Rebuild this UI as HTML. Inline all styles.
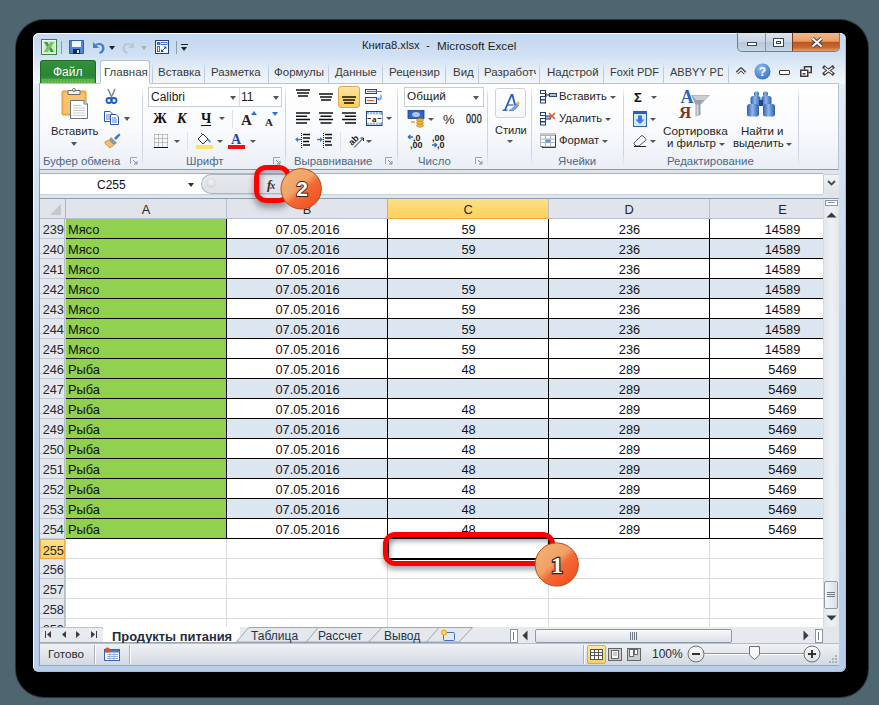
<!DOCTYPE html>
<html><head><meta charset="utf-8">
<style>
*{box-sizing:border-box;margin:0;padding:0}
html,body{width:879px;height:705px;overflow:hidden}
body{background:#4e6670;position:relative;font-family:"Liberation Sans",sans-serif;color:#1e1e1e}
.a{position:absolute}
.t{position:absolute;white-space:pre;line-height:1}
svg{position:absolute;overflow:visible}
#shadow{left:16px;top:20px;width:852px;height:677px;background:#000;border-radius:28px;box-shadow:0 0 0 1px rgba(0,0,0,.5)}
#win{left:33px;top:33px;width:813px;height:639px;border-radius:6px;background:linear-gradient(#cadcf2,#d6e5f6 25px,#e4edf8 50px,#d3e2f4 140px,#bdd3eb 300px,#b6cee9);box-shadow:inset 1px 1px 0 #f6f9fd,inset -1px -1px 0 #a9bfd9}
#titlebar{left:34px;top:34px;width:811px;height:24px;border-radius:5px 5px 0 0;background:linear-gradient(#c3d8f1,#c8dbf2 45%,#d3e3f5)}
#tabrow{left:34px;top:58px;width:811px;height:26px;background:linear-gradient(#d6e4f5,#e4edf8 45%,#f3f7fc)}
.grp{position:absolute;top:86px;width:1px;height:81px;background:linear-gradient(rgba(205,214,226,0),#cdd6e2 15%,#cdd6e2 85%,rgba(205,214,226,0))}
.glab{position:absolute;top:156px;font-size:11.4px;color:#4e6784;white-space:pre;line-height:1}
.rt{position:absolute;font-size:11.3px;color:#262626;white-space:pre;line-height:1}
.dd{position:absolute;width:0;height:0;border-left:3px solid transparent;border-right:3px solid transparent;border-top:3px solid #555}
.tab{position:absolute;top:67px;font-size:11.5px;color:#3a3a3a;line-height:1;white-space:pre}
.tsep{position:absolute;top:62px;width:1px;height:21px;background:linear-gradient(rgba(190,205,222,0),#bfcddd 35%,#b9c8da)}
.row{position:absolute;left:40px;width:783px;height:20px}
.rh{position:absolute;left:40px;width:25px;height:20px;background:#e4e7ec;border-bottom:1px solid #c5cbd4;border-right:1px solid #b4bcc7;font-size:12.8px;color:#2a2a2a;text-align:right;padding-right:0;line-height:22px}
.c{position:absolute;height:20px;font-size:12.8px;line-height:22px;color:#111;white-space:pre}

</style></head>
<body>
<div id="shadow" class="a"></div>
<div id="win" class="a"></div>
<div id="titlebar" class="a"></div>
<div id="tabrow" class="a"></div>
<div class="t" style="left:362px;top:40px;font-size:11.2px;color:#1f1f1f">Книга8.xlsx</div><div class="t" style="left:426px;top:40px;font-size:11.5px;color:#1f1f1f">-</div><div class="t" style="left:437px;top:40px;font-size:11.7px;color:#1f1f1f">Microsoft Excel</div>
<!-- QAT -->
<svg style="left:41px;top:39px" width="16" height="16" viewBox="0 0 16 16">
 <rect x="0.5" y="0.5" width="15" height="15" fill="#f4f8f2" stroke="#2a8a3a"/>
 <rect x="2" y="2" width="12" height="12" fill="#d8e6d0"/>
 <path d="M3 3 L6.5 3 L8 6 L9.5 3 L13 3 L10 8 L13 13 L9.5 13 L8 10 L6.5 13 L3 13 L6 8 Z" fill="#3aa040"/>
 <path d="M9.5 3 L13 3 L7 13 L3 13 Z" fill="#7fd36a" opacity=".8"/>
</svg>
<div class="a" style="left:61px;top:41px;width:1px;height:13px;background:#8d9aaa"></div>
<svg style="left:69px;top:40px" width="15" height="14" viewBox="0 0 15 14">
 <rect x="0" y="0" width="15" height="14" rx="1" fill="#2f5fb6"/>
 <rect x="1" y="1" width="13" height="12" fill="#4d86d8"/>
 <rect x="3" y="1" width="9" height="6" fill="#f2f5fa"/>
 <rect x="4" y="9" width="7" height="5" fill="#1c2c4a"/>
 <rect x="8" y="10" width="2" height="3" fill="#d8dde6"/>
</svg>
<svg style="left:91px;top:40px" width="14" height="14" viewBox="0 0 14 14">
 <path d="M2 2 L2 8 L8 8 L5.6 5.6 C7.5 4 10.5 4.6 11 7.5 C11.3 9.6 10 11.5 8 12.5 L9.5 14 C12.5 12.6 14 10 13.4 7 C12.6 3 8 1.6 4.4 4.4 Z" fill="#3b7fd6"/>
</svg>
<div class="dd" style="left:109px;top:46px;border-top-color:#222;border-left-width:3.5px;border-right-width:3.5px;border-top-width:4px"></div>
<svg style="left:122px;top:40px" width="14" height="14" viewBox="0 0 14 14">
 <path d="M12 2 L12 8 L6 8 L8.4 5.6 C6.5 4 3.5 4.6 3 7.5 C2.7 9.6 4 11.5 6 12.5 L4.5 14 C1.5 12.6 0 10 0.6 7 C1.4 3 6 1.6 9.6 4.4 Z" fill="#bfc6cf"/>
</svg>
<div class="dd" style="left:141px;top:46px;border-top-color:#a9b1bb;border-left-width:3.5px;border-right-width:3.5px;border-top-width:4px"></div>
<svg style="left:155px;top:40px" width="14" height="14" viewBox="0 0 14 14">
 <rect x="0.5" y="0.5" width="13" height="13" fill="#fbfcfe" stroke="#26407a"/>
 <rect x="2" y="2" width="3" height="3" fill="#3c70c8"/>
 <rect x="6" y="2.5" width="6" height="2" fill="none" stroke="#3c70c8" stroke-width="1"/>
 <rect x="2.5" y="6.5" width="2" height="5" fill="none" stroke="#3c70c8"/>
 <path d="M6.5 11.5 L11 7 M9 7 L11 7 L11 9 M6.5 9.5 L6.5 11.5 L8.5 11.5" stroke="#2250a8" fill="none"/>
</svg>
<div class="a" style="left:176px;top:41px;width:1px;height:13px;background:#8d9aaa"></div>
<div class="a" style="left:181px;top:44px;width:7px;height:1px;background:#222"></div>
<div class="dd" style="left:181px;top:47px;border-top-color:#222;border-left-width:3.5px;border-right-width:3.5px;border-top-width:4px"></div>
<!-- window buttons -->
<div class="a" style="left:737px;top:33px;width:103px;height:19px;border:1px solid #6f7f94;border-top:none;border-radius:0 0 5px 5px;background:linear-gradient(#dbe4ef,#c9d5e3 50%,#b8c8da 51%,#c8d6e6);overflow:hidden">
 <div class="a" style="left:27px;top:0;width:1px;height:18px;background:#8494a8"></div>
 <div class="a" style="left:54px;top:0;width:48px;height:18px;background:linear-gradient(#f3b886,#eca069 45%,#b9591f 52%,#c8682e 80%,#e0a070);border-left:1px solid #7a3a22"></div>
 <div class="a" style="left:9px;top:9px;width:10px;height:4px;border:1px solid #3a4656;background:#fff"></div>
 <div class="a" style="left:35px;top:5px;width:11px;height:9px;border:1px solid #3a4656;background:#fff"><div class="a" style="left:2px;top:2px;width:5px;height:3px;border:1px solid #3a4656"></div></div>
 <svg style="left:73px;top:5px" width="12" height="9" viewBox="0 0 12 9"><path d="M1.5 0.5 L10.5 8.5 M10.5 0.5 L1.5 8.5" stroke="#3b3b4a" stroke-width="4"/><path d="M1.5 0.5 L10.5 8.5 M10.5 0.5 L1.5 8.5" stroke="#fff" stroke-width="2.2"/></svg>
</div>
<!-- right of tab row -->
<svg style="left:736px;top:67px" width="10" height="8" viewBox="0 0 10 8"><path d="M1 6 L5 2 L9 6" stroke="#3a3a3a" stroke-width="3.4" fill="none" stroke-linejoin="round"/><path d="M1.3 6 L5 2.3 L8.7 6" stroke="#fff" stroke-width="1.2" fill="none"/></svg>
<svg style="left:754px;top:63px" width="17" height="17" viewBox="0 0 17 17">
 <defs><radialGradient id="hg" cx="40%" cy="30%" r="70%"><stop offset="0" stop-color="#8cbcf0"/><stop offset="1" stop-color="#3a78cc"/></radialGradient></defs>
 <circle cx="8.5" cy="8.5" r="8" fill="url(#hg)"/>
 <text x="8.5" y="13" text-anchor="middle" font-family="Liberation Sans" font-weight="bold" font-size="12" fill="#fff">?</text>
</svg>
<div class="a" style="left:779px;top:70px;width:11px;height:5px;border:1.5px solid #3a3a3a;background:#fff;border-radius:1px"></div>
<svg style="left:800px;top:66px" width="12" height="11" viewBox="0 0 12 11"><path d="M4.5 3.5 V0.75 H11.25 V6.5 H8.5" fill="#fff" stroke="#3a3a3a" stroke-width="1.5"/><rect x="0.75" y="4.25" width="7" height="6" fill="#fff" stroke="#3a3a3a" stroke-width="1.5"/><rect x="2.5" y="7" width="3" height="1.5" fill="#3a3a3a"/></svg>
<svg style="left:822px;top:66px" width="13" height="9" viewBox="0 0 13 9"><path d="M2.5 1.5 L10.5 7.5 M10.5 1.5 L2.5 7.5" stroke="#3a3a3a" stroke-width="3.4" stroke-linecap="square"/><path d="M2.5 1.5 L10.5 7.5 M10.5 1.5 L2.5 7.5" stroke="#fff" stroke-width="1.4" stroke-linecap="butt"/></svg>
<div class="a" style="left:40px;top:60px;width:56px;height:24px;border-radius:3px 3px 0 0;background:linear-gradient(#33903b,#2b8534 60%,#3a9a3a);border:1px solid #1f6a26;border-bottom:none"></div>
<div class="a" style="left:41px;top:77px;width:54px;height:6px;background:linear-gradient(rgba(60,160,60,0),#4fae45);"></div><div class="a" style="left:42px;top:79px;width:52px;height:4px;background:repeating-linear-gradient(90deg,#7cc75c 0 2px,#5ab048 2px 3px);opacity:.55"></div>
<div class="t" style="left:53px;top:66px;font-size:12px;color:#fff">Файл</div>
<div class="a" style="left:100px;top:60px;width:50px;height:25px;border:1px solid #b6c3d3;border-bottom:none;border-radius:3px 3px 0 0;background:#fff"></div>
<div class="tab" style="left:104px">Главная</div>
<div class="tsep" style="left:152px"></div>
<div class="tab" style="left:158px">Вставка</div>
<div class="tsep" style="left:204px"></div>
<div class="tab" style="left:211px">Разметка</div>
<div class="tsep" style="left:268px"></div>
<div class="tab" style="left:274px">Формулы</div>
<div class="tsep" style="left:328px"></div>
<div class="tab" style="left:335px">Данные</div>
<div class="tsep" style="left:382px"></div>
<div class="tab" style="left:389px">Рецензир</div>
<div class="tsep" style="left:445px"></div>
<div class="tab" style="left:453px">Вид</div>
<div class="tsep" style="left:478px"></div>
<div class="tab" style="left:484px;width:52px;overflow:hidden">Разработч</div>
<div class="tsep" style="left:539px"></div>
<div class="tab" style="left:547px">Надстрой</div>
<div class="tsep" style="left:603px"></div>
<div class="tab" style="left:610px;font-size:11px">Foxit PDF</div>
<div class="tsep" style="left:663px"></div>
<div class="tab" style="left:670px;font-size:11px;width:53px;overflow:hidden">ABBYY PDF</div>
<div class="tsep" style="left:728px"></div>
<div class="a" style="left:39px;top:83px;width:800px;height:87px;background:linear-gradient(#ffffff,#fafbfd 40px,#f1f4f9 66px,#e9eef5 86px);border-top:1px solid #b5c4d6;border-left:1px solid #9aa9bb;border-right:1px solid #b5c2d2;border-bottom:1px solid #8d98a6"></div>
<div class="a" style="left:100px;top:83px;width:50px;height:2px;background:#fff"></div>
<div class="grp" style="left:142px"></div>
<div class="grp" style="left:285px"></div>
<div class="grp" style="left:397px"></div>
<div class="grp" style="left:487px"></div>
<div class="grp" style="left:531px"></div>
<div class="grp" style="left:623px"></div>
<div class="grp" style="left:798px"></div>
<div class="glab" style="left:43px">Буфер обмена</div>
<div class="glab" style="left:186px">Шрифт</div>
<div class="glab" style="left:294px">Выравнивание</div>
<div class="glab" style="left:418px">Число</div>
<div class="glab" style="left:558px">Ячейки</div>
<div class="glab" style="left:667px">Редактирование</div>
<!-- launchers -->
<svg style="left:130px;top:157px" width="8" height="8" viewBox="0 0 8 8"><path d="M0.5 7 V0.5 H7" stroke="#9aa6b4" fill="none"/><path d="M3 3 L7 7 M7 4 V7 H4" stroke="#7f8c9b" fill="none"/></svg>
<svg style="left:273px;top:157px" width="8" height="8" viewBox="0 0 8 8"><path d="M0.5 7 V0.5 H7" stroke="#9aa6b4" fill="none"/><path d="M3 3 L7 7 M7 4 V7 H4" stroke="#7f8c9b" fill="none"/></svg>
<svg style="left:385px;top:157px" width="8" height="8" viewBox="0 0 8 8"><path d="M0.5 7 V0.5 H7" stroke="#9aa6b4" fill="none"/><path d="M3 3 L7 7 M7 4 V7 H4" stroke="#7f8c9b" fill="none"/></svg>
<svg style="left:475px;top:157px" width="8" height="8" viewBox="0 0 8 8"><path d="M0.5 7 V0.5 H7" stroke="#9aa6b4" fill="none"/><path d="M3 3 L7 7 M7 4 V7 H4" stroke="#7f8c9b" fill="none"/></svg>
<!-- Clipboard group -->
<svg style="left:61px;top:88px" width="28" height="32" viewBox="0 0 28 32">
 <rect x="1" y="3" width="24" height="24" rx="1" fill="#f7b65a" stroke="#e39a36"/>
 <rect x="3" y="5" width="20" height="20" fill="#f9c878" opacity=".7"/>
 <path d="M7 2.5 H19 V6.5 H7 Z" fill="#f2f2f2" stroke="#6b6b6b"/>
 <circle cx="13" cy="2" r="1.6" fill="#fff" stroke="#6b6b6b" stroke-width=".8"/>
 <circle cx="13" cy="2.2" r=".6" fill="#c0392b"/>
 <path d="M9.5 12.5 H23 L26.5 16 V30.5 H9.5 Z" fill="#fff" stroke="#6f7680"/>
 <path d="M23 12.5 V16 H26.5" fill="#e6e9ee" stroke="#6f7680"/>
 <path d="M12 17.5 H20 M12 20 H24 M12 22.5 H24 M12 25 H24 M12 27.5 H24" stroke="#c8ccd2"/>
</svg>
<div class="rt" style="left:51px;top:126px;font-size:11.2px">Вставить</div>
<div class="dd" style="left:71px;top:142px;border-top-color:#555;border-left-width:3.5px;border-right-width:3.5px;border-top-width:4px"></div>
<svg style="left:106px;top:89px" width="11" height="15" viewBox="0 0 11 15">
 <path d="M2 0 L6 9 M9 0 L5 9" stroke="#7d8590" stroke-width="1.5"/>
 <circle cx="3" cy="11.5" r="2.5" fill="none" stroke="#1e5cc4" stroke-width="1.8"/>
 <circle cx="8" cy="11.5" r="2.5" fill="none" stroke="#1e5cc4" stroke-width="1.8"/>
</svg>
<svg style="left:104px;top:111px" width="16" height="14" viewBox="0 0 16 14">
 <path d="M0.5 0.5 H6 L8.5 3 V10.5 H0.5 Z" fill="#fff" stroke="#2a5aa8"/>
 <path d="M2 4 H6 M2 6 H7 M2 8 H7" stroke="#4a86d0"/>
 <path d="M6.5 3.5 H12 L14.5 6 V13.5 H6.5 Z" fill="#fff" stroke="#2a5aa8"/>
 <path d="M8 7 H12 M8 9 H13 M8 11 H13" stroke="#4a86d0"/>
</svg>
<div class="dd" style="left:124px;top:117px;border-top-color:#555;border-left-width:3.5px;border-right-width:3.5px;border-top-width:4px"></div>
<svg style="left:104px;top:133px" width="17" height="15" viewBox="0 0 17 15">
 <path d="M10 5 L15 0.5 L16.5 2 L12 7 Z" fill="#3f76c4"/>
 <path d="M7 4 L13 10 L10 12 L5 7 Z" fill="#8f969e"/>
 <path d="M5 7 L10 12 L6 15 L0.5 10 Q1 8 5 7 Z" fill="#f0c070" stroke="#d48a2c" stroke-width=".8"/>
</svg>
<!-- Font group -->
<div class="a" style="left:148px;top:87px;width:134px;height:20px;border:1px solid #c5cdd7;background:#fff"></div>
<div class="a" style="left:239px;top:88px;width:1px;height:18px;background:#d7dde4"></div>
<div class="rt" style="left:151px;top:91px;font-size:12px;color:#1c1c1c">Calibri</div>
<div class="dd" style="left:230px;top:96px;border-top-color:#555;border-left-width:3px;border-right-width:3px;border-top-width:4px"></div>
<div class="rt" style="left:241px;top:91px;font-size:12px;color:#1c1c1c">11</div>
<div class="dd" style="left:273px;top:96px;border-top-color:#555;border-left-width:3px;border-right-width:3px;border-top-width:4px"></div>
<div class="t" style="left:153px;top:111px;font:bold 14px 'Liberation Serif';color:#111">Ж</div>
<div class="t" style="left:177px;top:111px;font:bold italic 14px 'Liberation Serif';color:#111">К</div>
<div class="t" style="left:201px;top:111px;font:bold 14px 'Liberation Serif';color:#111">Ч</div>
<div class="a" style="left:201px;top:125px;width:10px;height:1px;background:#111"></div>
<div class="dd" style="left:219px;top:117px"></div>
<div class="a" style="left:232px;top:110px;width:1px;height:18px;background:#dde3ea"></div>
<div class="t" style="left:241px;top:112px;font:bold 15px 'Liberation Serif';color:#2c2020">A</div>
<svg style="left:251px;top:111px" width="6" height="4" viewBox="0 0 6 4"><path d="M0 4 L3 0 L6 4Z" fill="#2f6fc8"/></svg>
<div class="t" style="left:265px;top:116px;font:bold 11px 'Liberation Serif';color:#2c2020">A</div>
<svg style="left:272px;top:112px" width="6" height="4" viewBox="0 0 6 4"><path d="M0 0 L3 4 L6 0Z" fill="#2f6fc8"/></svg>
<svg style="left:154px;top:134px" width="14" height="14" viewBox="0 0 14 14">
 <path d="M0.5 0.5 H13.5 M0.5 4.5 H13.5 M0.5 8.5 H13.5 M0.5 0.5 V13 M4.5 0.5 V13 M8.5 0.5 V13 M13.5 0.5 V13" stroke="#8f8f8f" stroke-dasharray="1 1"/>
 <path d="M0 13.5 H14" stroke="#111"/>
</svg>
<div class="dd" style="left:174px;top:140px"></div>
<div class="a" style="left:187px;top:132px;width:1px;height:18px;background:#dde3ea"></div>
<svg style="left:196px;top:132px" width="17" height="17" viewBox="0 0 17 17">
 <path d="M2 7 L7 2 L12 7 L7 12 Z" fill="#fff" stroke="#333"/>
 <path d="M5 1 L7 3" stroke="#333"/>
 <path d="M12 7 Q15 8 14.5 11 Q13 9 11 8 Z" fill="#2e6fcf"/>
 <rect x="0" y="13" width="17" height="4" fill="#fde26a"/>
</svg>
<div class="dd" style="left:217px;top:140px"></div>
<div class="t" style="left:231px;top:132px;font:bold 14px 'Liberation Serif';color:#1f4aa0">A</div>
<div class="a" style="left:228px;top:145px;width:17px;height:4px;background:#ee1111"></div>
<div class="dd" style="left:250px;top:140px"></div>
<!-- Alignment group -->
<svg style="left:296px;top:89px" width="15" height="9" viewBox="0 0 15 9"><path d="M0 1 H14 M1 4 H13 M2 7 H12" stroke="#111" stroke-width="1.6"/></svg>
<svg style="left:319px;top:93px" width="15" height="9" viewBox="0 0 15 9"><path d="M0 1 H14 M1 4 H13 M2 7 H12" stroke="#111" stroke-width="1.6"/></svg>
<div class="a" style="left:338px;top:86px;width:22px;height:22px;border:1px solid #e5a250;border-radius:3px;background:linear-gradient(#fde7a6,#fcd97a 45%,#fbcf5e)"></div>
<svg style="left:342px;top:96px" width="15" height="9" viewBox="0 0 15 9"><path d="M0 1 H14 M1 4 H13 M2 7 H12" stroke="#111" stroke-width="1.6"/></svg>
<svg style="left:365px;top:89px" width="18" height="15" viewBox="0 0 18 15">
 <rect x="0.5" y="0.5" width="11" height="4" fill="#e8eef6" stroke="#24427e"/>
 <path d="M2 2.5 H17" stroke="#c7602a"/>
 <rect x="0.5" y="8.5" width="11" height="6" fill="#e8eef6" stroke="#24427e"/>
 <path d="M2 11.5 H9" stroke="#c7602a"/>
 <path d="M16 6 V10 H13 M14 8.5 L12.5 10 L14 11.5" stroke="#2f6fc8" fill="none"/>
</svg>
<svg style="left:296px;top:112px" width="15" height="13" viewBox="0 0 15 13"><path d="M0 1 H14 M0 4.3 H11 M0 7.6 H14 M0 10.9 H11" stroke="#111" stroke-width="1.5"/></svg>
<svg style="left:319px;top:112px" width="15" height="13" viewBox="0 0 15 13"><path d="M0 1 H14 M1.5 4.3 H12.5 M0 7.6 H14 M1.5 10.9 H12.5" stroke="#111" stroke-width="1.5"/></svg>
<svg style="left:342px;top:112px" width="15" height="13" viewBox="0 0 15 13"><path d="M0 1 H14 M3 4.3 H14 M0 7.6 H14 M3 10.9 H14" stroke="#111" stroke-width="1.5"/></svg>
<svg style="left:366px;top:111px" width="17" height="15" viewBox="0 0 17 15">
 <rect x="0.5" y="0.5" width="15.5" height="14" fill="#dbe8f7" stroke="#26407a"/>
 <rect x="1" y="4" width="15" height="7" fill="#fff"/>
 <path d="M1 2 H16 M1 13 H16" stroke="#5a8fd8" stroke-dasharray="2 1"/>
 <path d="M1.5 7.5 H5 M11.5 7.5 H15.5" stroke="#333"/>
 <text x="8.3" y="10.5" text-anchor="middle" font-family="Liberation Serif" font-weight="bold" font-size="9" fill="#222">a</text>
</svg>
<div class="dd" style="left:386px;top:117px"></div>
<svg style="left:295px;top:133px" width="16" height="15" viewBox="0 0 16 15">
 <path d="M6.5 0 V15" stroke="#111" stroke-dasharray="1 1"/>
 <path d="M8 1.5 H15 M8 5 H15 M8 8.5 H14 M8 12 H15" stroke="#111" stroke-width="1.6"/>
 <path d="M0 6.5 L3 4 V9 Z" fill="#3a7ad6"/><path d="M2 6.5 H6" stroke="#3a7ad6" stroke-width="1.4"/>
</svg>
<svg style="left:317px;top:133px" width="16" height="15" viewBox="0 0 16 15">
 <path d="M6.5 0 V15" stroke="#111" stroke-dasharray="1 1"/>
 <path d="M8 1.5 H15 M8 5 H15 M8 8.5 H14 M8 12 H15" stroke="#111" stroke-width="1.6"/>
 <path d="M6 6.5 L3 4 V9 Z" fill="#3a7ad6"/><path d="M0 6.5 H4" stroke="#3a7ad6" stroke-width="1.4"/>
</svg>
<div class="a" style="left:340px;top:132px;width:1px;height:19px;background:#dde3ea"></div>
<svg style="left:349px;top:134px" width="16" height="14" viewBox="0 0 16 14">
 <text x="0" y="0" transform="translate(3,12) rotate(-45)" font-family="Liberation Sans" font-weight="bold" font-size="9" fill="#222">ab</text>
 <path d="M5 13.5 L14 4.5" stroke="#222"/><path d="M11.5 4 H14.5 V7" stroke="#222" fill="none"/>
</svg>
<div class="dd" style="left:366px;top:140px"></div>
<!-- Number group -->
<div class="a" style="left:404px;top:87px;width:80px;height:20px;border:1px solid #c5cdd7;background:#fff"></div>
<div class="rt" style="left:407px;top:91px;font-size:11.8px;color:#1c1c1c">Общий</div>
<div class="dd" style="left:473px;top:96px;border-left-width:3px;border-right-width:3px;border-top-width:4px"></div>
<svg style="left:408px;top:110px" width="17" height="18" viewBox="0 0 17 18">
 <rect x="0" y="0.5" width="16" height="8" fill="#2d66c4" stroke="#1d3f86" stroke-width=".8"/>
 <ellipse cx="8" cy="4.5" rx="4" ry="2.5" fill="#a9c7ee"/>
 <ellipse cx="12" cy="10" rx="3.5" ry="1.6" fill="#f2b640" stroke="#b77a10" stroke-width=".6"/>
 <ellipse cx="12" cy="12.8" rx="3.5" ry="1.6" fill="#f2b640" stroke="#b77a10" stroke-width=".6"/>
 <ellipse cx="12" cy="15.6" rx="3.5" ry="1.6" fill="#f2b640" stroke="#b77a10" stroke-width=".6"/>
 <path d="M3 12 H7" stroke="#e8a030" stroke-width="1.5"/>
</svg>
<div class="dd" style="left:428px;top:118px"></div>
<div class="t" style="left:443px;top:113px;font-size:13px;color:#1c1c1c">%</div>
<div class="t" style="left:466px;top:113px;font-size:12.5px;color:#1c1c1c;transform:scaleX(.72);transform-origin:0 0;letter-spacing:.5px;-webkit-text-stroke:.3px #1c1c1c">000</div>
<svg style="left:407px;top:134px" width="18" height="15" viewBox="0 0 18 15">
 <path d="M1 3 H6 M1 3 L3.5 1 M1 3 L3.5 5" stroke="#2f6fc8" stroke-width="1.3" fill="none"/>
 <text x="6" y="6.5" font-family="Liberation Sans" font-weight="bold" font-size="9" fill="#222">,0</text>
 <text x="3" y="14" font-family="Liberation Sans" font-weight="bold" font-size="9" fill="#222">,00</text>
</svg>
<svg style="left:431px;top:134px" width="18" height="15" viewBox="0 0 18 15">
 <text x="1" y="6.5" font-family="Liberation Sans" font-weight="bold" font-size="9" fill="#222">,00</text>
 <path d="M1 11 H6 M6 11 L3.5 9 M6 11 L3.5 13" stroke="#2f6fc8" stroke-width="1.3" fill="none"/>
 <text x="6" y="14" font-family="Liberation Sans" font-weight="bold" font-size="9" fill="#222">,0</text>
</svg>
<!-- Styles -->
<div class="a" style="left:495px;top:88px;width:31px;height:30px;border:1px solid #cdd3db;border-radius:3px;background:linear-gradient(#fff,#f5f7fa)"></div>
<svg style="left:502px;top:94px" width="18" height="18" viewBox="0 0 18 18">
 <path d="M0.5 16.2 H5.5" stroke="#2a5cb8" stroke-width="1.4"/>
 <path d="M3 16 L9.5 1 L10.5 1 L13 11" stroke="#2a5cb8" stroke-width="1.8" fill="none"/>
 <path d="M5.5 11 H11.5" stroke="#2a5cb8" stroke-width="1.2"/>
 <path d="M7 16.5 Q10 15.5 12 12.5 L14.5 9.5 L16.5 11.5 Q14.5 14.5 11.5 16.5 Z" fill="#74a6e2" stroke="#3a6cc0" stroke-width=".6"/>
 <path d="M14.5 9.5 L16.5 7 L17.5 9 L16.5 11.5 Z" fill="#f2b030"/>
</svg>
<div class="rt" style="left:495px;top:125px;font-size:11px">Стили</div>
<div class="dd" style="left:507px;top:140px"></div>
<!-- Cells group -->
<svg style="left:540px;top:90px" width="17" height="14" viewBox="0 0 17 14">
 <rect x="0.5" y="0.5" width="5" height="3" fill="#fff" stroke="#26407a"/>
 <rect x="0.5" y="6.5" width="5" height="3" fill="#fff" stroke="#26407a"/>
 <rect x="0.5" y="10" width="5" height="3" fill="#fff" stroke="#26407a"/>
 <path d="M5 5 H9 M6.5 3.5 L5 5 L6.5 6.5" stroke="#111" fill="none"/>
 <rect x="9.5" y="3.5" width="7" height="3" fill="#9cc4f0" stroke="#26407a"/>
</svg>
<div class="rt" style="left:559px;top:91px">Вставить</div>
<div class="dd" style="left:610px;top:96px"></div>
<svg style="left:540px;top:112px" width="17" height="14" viewBox="0 0 17 14">
 <rect x="0.5" y="0.5" width="5" height="3" fill="#fff" stroke="#26407a"/>
 <rect x="0.5" y="6.5" width="5" height="3" fill="#fff" stroke="#26407a"/>
 <rect x="0.5" y="10" width="5" height="3" fill="#fff" stroke="#26407a"/>
 <rect x="5.5" y="4" width="5" height="3" fill="#9cc4f0" stroke="#26407a"/>
 <path d="M9 1 L15 7 M15 1 L9 7" stroke="#f05a20" stroke-width="1.6"/>
</svg>
<div class="rt" style="left:559px;top:113px">Удалить</div>
<div class="dd" style="left:605px;top:118px"></div>
<svg style="left:540px;top:133px" width="17" height="16" viewBox="0 0 17 16">
 <path d="M0.5 1 H15.5" stroke="#26407a" stroke-dasharray="1 1"/>
 <rect x="0.5" y="2.5" width="15" height="11" fill="#fff" stroke="#aab4c0"/>
 <path d="M0.5 6 H15.5 M0.5 9.5 H15.5 M5.5 2.5 V13.5 M10.5 2.5 V13.5" stroke="#aab4c0"/>
 <rect x="6" y="6.5" width="4" height="3" fill="#5a9ae0"/>
 <path d="M15.5 2 V14.5 H2 V13" stroke="#26407a" fill="none"/>
</svg>
<div class="rt" style="left:559px;top:135px">Формат</div>
<div class="dd" style="left:602px;top:140px"></div>
<!-- Editing group -->
<div class="t" style="left:634px;top:90px;font:bold 13px 'Liberation Sans';color:#111">Σ</div>
<div class="dd" style="left:651px;top:96px"></div>
<svg style="left:633px;top:111px" width="14" height="16" viewBox="0 0 14 16">
 <rect x="0.5" y="0.5" width="13" height="15" fill="#d7e6f8" stroke="#2f5fb0"/>
 <rect x="0.5" y="0.5" width="13" height="2.5" fill="#2f5fb0"/>
 <path d="M5 4.5 H9 V8.5 H11.5 L7 13 L2.5 8.5 H5 Z" fill="#2f7ee0"/>
</svg>
<div class="dd" style="left:650px;top:118px"></div>
<svg style="left:633px;top:134px" width="14" height="13" viewBox="0 0 14 13">
 <path d="M1 9 L8 2 Q9 1 10 2 L12.5 4.5 Q13.5 5.5 12.5 6.5 L6 12 H3 L1 10 Z" fill="#f4f6f9" stroke="#555"/>
 <path d="M1 12.5 H13" stroke="#222"/>
</svg>
<div class="dd" style="left:650px;top:140px"></div>
<svg style="left:679px;top:89px" width="33" height="30" viewBox="0 0 33 30">
 <text x="1.5" y="14" font-family="Liberation Serif" font-weight="bold" font-size="18" fill="#2f62c0">A</text>
 <text x="0" y="28.5" font-family="Liberation Serif" font-weight="bold" font-size="17" fill="#7a3a2a">Я</text>
 <path d="M12 6 H31 L21.5 15.5 V26 L16.5 27.5 V15.5 Z" fill="#9ba2aa"/>
 <path d="M13 6.5 H30 L26 11 H17 Z" fill="#c9ced4"/>
 <path d="M17.5 15.5 V27 L19.5 26.5 V15.5 Z" fill="#d4d8dd"/>
</svg>
<div class="rt" style="left:663px;top:126px;font-size:11.8px">Сортировка</div>
<div class="rt" style="left:667px;top:138px;font-size:11.5px">и фильтр</div>
<div class="dd" style="left:719px;top:143px"></div>
<svg style="left:747px;top:91px" width="28" height="26" viewBox="0 0 28 26">
 <defs><linearGradient id="bg1" x1="0" x2="1"><stop offset="0" stop-color="#2a5cb0"/><stop offset=".45" stop-color="#8fb6e8"/><stop offset="1" stop-color="#2a5cb0"/></linearGradient></defs>
 <rect x="7" y="0.5" width="5" height="5" rx="2" fill="url(#bg1)"/>
 <rect x="16" y="0.5" width="5" height="5" rx="2" fill="url(#bg1)"/>
 <rect x="3.5" y="5" width="10" height="9" rx="2.5" fill="url(#bg1)"/>
 <rect x="14.5" y="5" width="10" height="9" rx="2.5" fill="url(#bg1)"/>
 <rect x="0" y="13" width="12" height="12.5" rx="2.5" fill="url(#bg1)"/>
 <rect x="16" y="13" width="12" height="12.5" rx="2.5" fill="url(#bg1)"/>
 <rect x="12" y="9" width="4" height="6" fill="#1e4a8c"/>
</svg>
<div class="rt" style="left:741px;top:126px;font-size:11.5px">Найти и</div>
<div class="rt" style="left:733px;top:138px;font-size:11.5px;letter-spacing:-.1px">выделить</div>
<div class="dd" style="left:786px;top:143px"></div>
<div class="a" style="left:39px;top:170px;width:800px;height:29px;background:#dfe5ed"></div>
<div class="a" style="left:39px;top:173px;width:784px;height:22px;background:#fff;border-top:1px solid #a7b2bf;border-bottom:1px solid #c9d1db"></div>
<div class="a" style="left:39px;top:198px;width:800px;height:1px;background:#8f9cab"></div>
<div class="t" style="left:97px;top:179px;font-size:12px;color:#111">C255</div>
<div class="dd" style="left:188px;top:183px;border-top-color:#3a2a2a;border-left-width:3.5px;border-right-width:3.5px;border-top-width:4px"></div>
<div class="a" style="left:201px;top:174px;width:92px;height:20px;border-radius:10px 0 0 10px;background:linear-gradient(#e6e9ee,#dde1e7);border:1px solid #aeb6c0;border-right:none"></div>
<div class="a" style="left:206px;top:178px;width:10px;height:10px;border-radius:50%;background:radial-gradient(circle at 50% 40%,#f3f4f6,#c5c9cf)"></div>
<div class="t" style="left:267px;top:177px;font:bold italic 13px 'Liberation Serif';color:#3a2a2a;letter-spacing:-1px">f<span style="font-size:10px">x</span></div>
<div class="a" style="left:823px;top:174px;width:16px;height:20px;background:linear-gradient(#f0f2f5,#dfe3e8);border-left:1px solid #c8ced6;border-top:1px solid #c8ced6"></div>
<svg style="left:827px;top:180px" width="9" height="6" viewBox="0 0 9 6"><path d="M1 1 L4.5 4.5 L8 1" stroke="#4a4a4a" stroke-width="1.8" fill="none"/></svg>
<div class="a" style="left:39px;top:170px;width:1px;height:496px;background:#8f9aa8"></div>
<div class="a" style="left:40px;top:199px;width:783px;height:20px;background:#e1e4ea;border-bottom:1px solid #b7bfca"></div>
<svg style="left:50px;top:204px" width="11" height="11" viewBox="0 0 11 11"><path d="M11 0 V11 H0 Z" fill="#c3c8ce"/></svg>
<div class="a" style="left:65px;top:199px;width:1px;height:19px;background:#a9b5c3"></div>
<div class="a" style="left:226px;top:199px;width:1px;height:19px;background:#b8c2ce"></div>
<div class="t" style="left:126.0px;width:40px;text-align:center;top:204px;font-size:12.8px;color:#262626">A</div>
<div class="a" style="left:387px;top:199px;width:1px;height:19px;background:#b8c2ce"></div>
<div class="t" style="left:287.0px;width:40px;text-align:center;top:204px;font-size:12.8px;color:#262626">B</div>
<div class="a" style="left:387px;top:199px;width:162px;height:20px;background:linear-gradient(#fde188,#fcd66c 55%,#fbd260);border:1px solid #f2a840;border-top:none"></div>
<div class="a" style="left:548px;top:199px;width:1px;height:19px;background:#b8c2ce"></div>
<div class="t" style="left:448.0px;width:40px;text-align:center;top:204px;font-size:12.8px;color:#262626">C</div>
<div class="a" style="left:709px;top:199px;width:1px;height:19px;background:#b8c2ce"></div>
<div class="t" style="left:609.0px;width:40px;text-align:center;top:204px;font-size:12.8px;color:#262626">D</div>
<div class="t" style="left:762.5px;width:40px;text-align:center;top:204px;font-size:12.8px;color:#262626">E</div>
<div class="a" style="left:66px;top:219px;width:757px;height:20px;background:#fff"></div>
<div class="a" style="left:66px;top:219px;width:161px;height:20px;background:#92d050"></div>
<div class="rh" style="top:219px">239</div>
<div class="c" style="left:68px;top:219px">Мясо</div>
<div class="c" style="left:227px;width:161px;text-align:center;top:219px">07.05.2016</div>
<div class="c" style="left:388px;width:161px;text-align:center;top:219px">59</div>
<div class="c" style="left:549px;width:161px;text-align:center;top:219px">236</div>
<div class="c" style="left:702px;width:161px;text-align:center;top:219px">14589</div>
<div class="a" style="left:66px;top:239px;width:757px;height:20px;background:#dce6f1"></div>
<div class="a" style="left:66px;top:239px;width:161px;height:20px;background:#92d050"></div>
<div class="rh" style="top:239px">240</div>
<div class="c" style="left:68px;top:239px">Мясо</div>
<div class="c" style="left:227px;width:161px;text-align:center;top:239px">07.05.2016</div>
<div class="c" style="left:388px;width:161px;text-align:center;top:239px">59</div>
<div class="c" style="left:549px;width:161px;text-align:center;top:239px">236</div>
<div class="c" style="left:702px;width:161px;text-align:center;top:239px">14589</div>
<div class="a" style="left:66px;top:259px;width:757px;height:20px;background:#fff"></div>
<div class="a" style="left:66px;top:259px;width:161px;height:20px;background:#92d050"></div>
<div class="rh" style="top:259px">241</div>
<div class="c" style="left:68px;top:259px">Мясо</div>
<div class="c" style="left:227px;width:161px;text-align:center;top:259px">07.05.2016</div>
<div class="c" style="left:549px;width:161px;text-align:center;top:259px">236</div>
<div class="c" style="left:702px;width:161px;text-align:center;top:259px">14589</div>
<div class="a" style="left:66px;top:279px;width:757px;height:20px;background:#dce6f1"></div>
<div class="a" style="left:66px;top:279px;width:161px;height:20px;background:#92d050"></div>
<div class="rh" style="top:279px">242</div>
<div class="c" style="left:68px;top:279px">Мясо</div>
<div class="c" style="left:227px;width:161px;text-align:center;top:279px">07.05.2016</div>
<div class="c" style="left:388px;width:161px;text-align:center;top:279px">59</div>
<div class="c" style="left:549px;width:161px;text-align:center;top:279px">236</div>
<div class="c" style="left:702px;width:161px;text-align:center;top:279px">14589</div>
<div class="a" style="left:66px;top:299px;width:757px;height:20px;background:#fff"></div>
<div class="a" style="left:66px;top:299px;width:161px;height:20px;background:#92d050"></div>
<div class="rh" style="top:299px">243</div>
<div class="c" style="left:68px;top:299px">Мясо</div>
<div class="c" style="left:227px;width:161px;text-align:center;top:299px">07.05.2016</div>
<div class="c" style="left:388px;width:161px;text-align:center;top:299px">59</div>
<div class="c" style="left:549px;width:161px;text-align:center;top:299px">236</div>
<div class="c" style="left:702px;width:161px;text-align:center;top:299px">14589</div>
<div class="a" style="left:66px;top:319px;width:757px;height:20px;background:#dce6f1"></div>
<div class="a" style="left:66px;top:319px;width:161px;height:20px;background:#92d050"></div>
<div class="rh" style="top:319px">244</div>
<div class="c" style="left:68px;top:319px">Мясо</div>
<div class="c" style="left:227px;width:161px;text-align:center;top:319px">07.05.2016</div>
<div class="c" style="left:388px;width:161px;text-align:center;top:319px">59</div>
<div class="c" style="left:549px;width:161px;text-align:center;top:319px">236</div>
<div class="c" style="left:702px;width:161px;text-align:center;top:319px">14589</div>
<div class="a" style="left:66px;top:339px;width:757px;height:20px;background:#fff"></div>
<div class="a" style="left:66px;top:339px;width:161px;height:20px;background:#92d050"></div>
<div class="rh" style="top:339px">245</div>
<div class="c" style="left:68px;top:339px">Мясо</div>
<div class="c" style="left:227px;width:161px;text-align:center;top:339px">07.05.2016</div>
<div class="c" style="left:388px;width:161px;text-align:center;top:339px">59</div>
<div class="c" style="left:549px;width:161px;text-align:center;top:339px">236</div>
<div class="c" style="left:702px;width:161px;text-align:center;top:339px">14589</div>
<div class="a" style="left:66px;top:359px;width:757px;height:20px;background:#fff"></div>
<div class="a" style="left:66px;top:359px;width:161px;height:20px;background:#92d050"></div>
<div class="rh" style="top:359px">246</div>
<div class="c" style="left:68px;top:359px">Рыба</div>
<div class="c" style="left:227px;width:161px;text-align:center;top:359px">07.05.2016</div>
<div class="c" style="left:388px;width:161px;text-align:center;top:359px">48</div>
<div class="c" style="left:549px;width:161px;text-align:center;top:359px">289</div>
<div class="c" style="left:702px;width:161px;text-align:center;top:359px">5469</div>
<div class="a" style="left:66px;top:379px;width:757px;height:20px;background:#dce6f1"></div>
<div class="a" style="left:66px;top:379px;width:161px;height:20px;background:#92d050"></div>
<div class="rh" style="top:379px">247</div>
<div class="c" style="left:68px;top:379px">Рыба</div>
<div class="c" style="left:227px;width:161px;text-align:center;top:379px">07.05.2016</div>
<div class="c" style="left:549px;width:161px;text-align:center;top:379px">289</div>
<div class="c" style="left:702px;width:161px;text-align:center;top:379px">5469</div>
<div class="a" style="left:66px;top:399px;width:757px;height:20px;background:#fff"></div>
<div class="a" style="left:66px;top:399px;width:161px;height:20px;background:#92d050"></div>
<div class="rh" style="top:399px">248</div>
<div class="c" style="left:68px;top:399px">Рыба</div>
<div class="c" style="left:227px;width:161px;text-align:center;top:399px">07.05.2016</div>
<div class="c" style="left:388px;width:161px;text-align:center;top:399px">48</div>
<div class="c" style="left:549px;width:161px;text-align:center;top:399px">289</div>
<div class="c" style="left:702px;width:161px;text-align:center;top:399px">5469</div>
<div class="a" style="left:66px;top:419px;width:757px;height:20px;background:#dce6f1"></div>
<div class="a" style="left:66px;top:419px;width:161px;height:20px;background:#92d050"></div>
<div class="rh" style="top:419px">249</div>
<div class="c" style="left:68px;top:419px">Рыба</div>
<div class="c" style="left:227px;width:161px;text-align:center;top:419px">07.05.2016</div>
<div class="c" style="left:388px;width:161px;text-align:center;top:419px">48</div>
<div class="c" style="left:549px;width:161px;text-align:center;top:419px">289</div>
<div class="c" style="left:702px;width:161px;text-align:center;top:419px">5469</div>
<div class="a" style="left:66px;top:439px;width:757px;height:20px;background:#fff"></div>
<div class="a" style="left:66px;top:439px;width:161px;height:20px;background:#92d050"></div>
<div class="rh" style="top:439px">250</div>
<div class="c" style="left:68px;top:439px">Рыба</div>
<div class="c" style="left:227px;width:161px;text-align:center;top:439px">07.05.2016</div>
<div class="c" style="left:388px;width:161px;text-align:center;top:439px">48</div>
<div class="c" style="left:549px;width:161px;text-align:center;top:439px">289</div>
<div class="c" style="left:702px;width:161px;text-align:center;top:439px">5469</div>
<div class="a" style="left:66px;top:459px;width:757px;height:20px;background:#dce6f1"></div>
<div class="a" style="left:66px;top:459px;width:161px;height:20px;background:#92d050"></div>
<div class="rh" style="top:459px">251</div>
<div class="c" style="left:68px;top:459px">Рыба</div>
<div class="c" style="left:227px;width:161px;text-align:center;top:459px">07.05.2016</div>
<div class="c" style="left:388px;width:161px;text-align:center;top:459px">48</div>
<div class="c" style="left:549px;width:161px;text-align:center;top:459px">289</div>
<div class="c" style="left:702px;width:161px;text-align:center;top:459px">5469</div>
<div class="a" style="left:66px;top:479px;width:757px;height:20px;background:#fff"></div>
<div class="a" style="left:66px;top:479px;width:161px;height:20px;background:#92d050"></div>
<div class="rh" style="top:479px">252</div>
<div class="c" style="left:68px;top:479px">Рыба</div>
<div class="c" style="left:227px;width:161px;text-align:center;top:479px">07.05.2016</div>
<div class="c" style="left:388px;width:161px;text-align:center;top:479px">48</div>
<div class="c" style="left:549px;width:161px;text-align:center;top:479px">289</div>
<div class="c" style="left:702px;width:161px;text-align:center;top:479px">5469</div>
<div class="a" style="left:66px;top:499px;width:757px;height:20px;background:#dce6f1"></div>
<div class="a" style="left:66px;top:499px;width:161px;height:20px;background:#92d050"></div>
<div class="rh" style="top:499px">253</div>
<div class="c" style="left:68px;top:499px">Рыба</div>
<div class="c" style="left:227px;width:161px;text-align:center;top:499px">07.05.2016</div>
<div class="c" style="left:388px;width:161px;text-align:center;top:499px">48</div>
<div class="c" style="left:549px;width:161px;text-align:center;top:499px">289</div>
<div class="c" style="left:702px;width:161px;text-align:center;top:499px">5469</div>
<div class="a" style="left:66px;top:519px;width:757px;height:20px;background:#fff"></div>
<div class="a" style="left:66px;top:519px;width:161px;height:20px;background:#92d050"></div>
<div class="rh" style="top:519px">254</div>
<div class="c" style="left:68px;top:519px">Рыба</div>
<div class="c" style="left:227px;width:161px;text-align:center;top:519px">07.05.2016</div>
<div class="c" style="left:388px;width:161px;text-align:center;top:519px">48</div>
<div class="c" style="left:549px;width:161px;text-align:center;top:519px">289</div>
<div class="c" style="left:702px;width:161px;text-align:center;top:519px">5469</div>
<div class="a" style="left:66px;top:539px;width:757px;height:20px;background:#fff;border-bottom:1px solid #dadcdd"></div>
<div class="rh" style="top:539px;background:linear-gradient(#fde188,#fcd66c 55%,#fbd260);border:1px solid #f2a840;">255</div>
<div class="a" style="left:66px;top:559px;width:757px;height:20px;background:#fff;border-bottom:1px solid #dadcdd"></div>
<div class="rh" style="top:559px;">256</div>
<div class="a" style="left:66px;top:579px;width:757px;height:20px;background:#fff;border-bottom:1px solid #dadcdd"></div>
<div class="rh" style="top:579px;">257</div>
<div class="a" style="left:66px;top:599px;width:757px;height:20px;background:#fff;border-bottom:1px solid #dadcdd"></div>
<div class="rh" style="top:599px;">258</div>
<div class="a" style="left:66px;top:619px;width:757px;height:20px;background:#fff;border-bottom:1px solid #dadcdd"></div>
<div class="rh" style="top:619px;">259</div>
<div class="a" style="left:226px;top:539px;width:1px;height:88px;background:#dadcdd"></div>
<div class="a" style="left:387px;top:539px;width:1px;height:88px;background:#dadcdd"></div>
<div class="a" style="left:548px;top:539px;width:1px;height:88px;background:#dadcdd"></div>
<div class="a" style="left:709px;top:539px;width:1px;height:88px;background:#dadcdd"></div>
<div class="a" style="left:226px;top:219px;width:1px;height:320px;background:#000"></div>
<div class="a" style="left:387px;top:219px;width:1px;height:320px;background:#000"></div>
<div class="a" style="left:548px;top:219px;width:1px;height:320px;background:#000"></div>
<div class="a" style="left:709px;top:219px;width:1px;height:320px;background:#000"></div>
<div class="a" style="left:66px;top:238px;width:757px;height:1px;background:#000"></div>
<div class="a" style="left:66px;top:258px;width:757px;height:1px;background:#000"></div>
<div class="a" style="left:66px;top:278px;width:757px;height:1px;background:#000"></div>
<div class="a" style="left:66px;top:298px;width:757px;height:1px;background:#000"></div>
<div class="a" style="left:66px;top:318px;width:757px;height:1px;background:#000"></div>
<div class="a" style="left:66px;top:338px;width:757px;height:1px;background:#000"></div>
<div class="a" style="left:66px;top:358px;width:757px;height:1px;background:#000"></div>
<div class="a" style="left:66px;top:378px;width:757px;height:1px;background:#000"></div>
<div class="a" style="left:66px;top:398px;width:757px;height:1px;background:#000"></div>
<div class="a" style="left:66px;top:418px;width:757px;height:1px;background:#000"></div>
<div class="a" style="left:66px;top:438px;width:757px;height:1px;background:#000"></div>
<div class="a" style="left:66px;top:458px;width:757px;height:1px;background:#000"></div>
<div class="a" style="left:66px;top:478px;width:757px;height:1px;background:#000"></div>
<div class="a" style="left:66px;top:498px;width:757px;height:1px;background:#000"></div>
<div class="a" style="left:66px;top:518px;width:757px;height:1px;background:#000"></div>
<div class="a" style="left:66px;top:538px;width:757px;height:1px;background:#000"></div>
<!-- vertical scrollbar -->
<div class="a" style="left:823px;top:199px;width:16px;height:428px;background:linear-gradient(90deg,#e3e7ec,#eef1f4 50%,#e3e7ec);border-left:1px solid #d5dbe2"></div>
<div class="a" style="left:825px;top:200px;width:13px;height:6px;background:#fff;border:1px solid #8c97a4"></div>
<div class="a" style="left:828px;top:202px;width:7px;height:1px;background:#8c97a4"></div>
<svg style="left:826px;top:212px" width="11" height="6" viewBox="0 0 11 6"><path d="M0.5 5.5 L5.5 0.5 L10.5 5.5 Z" fill="#3a3a3a"/></svg>
<div class="a" style="left:824px;top:581px;width:14px;height:28px;border:1px solid #8f99a5;border-radius:2px;background:linear-gradient(90deg,#f4f6f8,#e6eaef 55%,#d9dee5)"></div>
<svg style="left:827px;top:592px" width="8" height="6" viewBox="0 0 8 6"><path d="M0 .5 H8 M0 2.5 H8 M0 4.5 H8" stroke="#6f7884"/></svg>
<svg style="left:826px;top:615px" width="11" height="6" viewBox="0 0 11 6"><path d="M0.5 0.5 L10.5 0.5 L5.5 5.5 Z" fill="#3a3a3a"/></svg>
<!-- sheet tab bar -->
<div class="a" style="left:40px;top:627px;width:799px;height:16px;background:#e6e9ee"></div>
<svg style="left:40px;top:627px" width="799" height="16" viewBox="0 0 799 16">
 <path d="M0 0.5 H62 L64 2 V15" stroke="#b9c1cb" fill="#e8ebef"/>
 <path d="M63 15.5 L63 0 H200 V15.5 Z" fill="#fff"/>
 <path d="M196.3 15 L208.8 0.5 H280 V15 Z" fill="#e4e7ec" stroke="#9ea7b2"/>
 <path d="M266.4 15 L278 0.5 H345 V15 Z" fill="#e4e7ec" stroke="#9ea7b2"/>
 <path d="M328.5 15 L342 0.5 H402 V15 Z" fill="#e4e7ec" stroke="#9ea7b2"/>
 <path d="M386.5 15 L399 0.5 H432.5 L419 15 Z" fill="#e4e7ec" stroke="#9ea7b2"/>
 <path d="M0 15.5 H470" stroke="#9ea7b2"/>
</svg>
<svg style="left:45px;top:631px" width="52" height="7" viewBox="0 0 52 7">
 <path d="M0.5 0 V7" stroke="#3c3c3c"/><path d="M2 3.5 L6 0 V7 Z" fill="#3c3c3c"/>
 <path d="M17 3.5 L21 0 V7 Z" fill="#3c3c3c"/>
 <path d="M31 0 L35 3.5 L31 7 Z" fill="#3c3c3c"/>
 <path d="M46 0 L50 3.5 L46 7 Z" fill="#3c3c3c"/><path d="M51.5 0 V7" stroke="#3c3c3c"/>
</svg>
<div class="t" style="left:112px;top:629px;font:bold 12.9px 'Liberation Sans';color:#1f2d44">Продукты питания</div>
<div class="t" style="left:251px;top:630px;font-size:12px;color:#22324a">Таблица</div>
<div class="t" style="left:318px;top:630px;font-size:12px;color:#22324a">Рассчет</div>
<div class="t" style="left:384px;top:630px;font-size:12px;color:#22324a">Вывод</div>
<svg style="left:440px;top:629px" width="16" height="12" viewBox="0 0 16 12">
 <rect x="3.5" y="3.5" width="11" height="8" rx="1" fill="#dfe9f7" stroke="#3f6fb8"/>
 <circle cx="4" cy="3.5" r="3" fill="#f5b030"/><circle cx="4" cy="3.5" r="1.5" fill="#fde080"/>
</svg>
<!-- hscroll -->
<div class="a" style="left:510px;top:629px;width:8px;height:14px;background:#fff;border:1px solid #8c97a4"></div>
<div class="a" style="left:513px;top:632px;width:1px;height:8px;background:#6c7784"></div>
<svg style="left:522px;top:630px" width="6" height="11" viewBox="0 0 6 11"><path d="M5.5 0.5 V10.5 L0.5 5.5 Z" fill="#3a3a3a"/></svg>
<div class="a" style="left:535px;top:629px;width:197px;height:14px;border:1px solid #8f99a5;border-radius:2px;background:linear-gradient(#f5f7f9,#e8ebef 55%,#dce0e6)"></div>
<svg style="left:630px;top:632px" width="8" height="8" viewBox="0 0 8 8"><path d="M.5 0 V8 M2.5 0 V8 M4.5 0 V8 M6.5 0 V8" stroke="#6f7884"/></svg>
<svg style="left:803px;top:630px" width="6" height="11" viewBox="0 0 6 11"><path d="M0.5 0.5 V10.5 L5.5 5.5 Z" fill="#3a3a3a"/></svg>
<div class="a" style="left:815px;top:629px;width:8px;height:14px;background:#fff;border:1px solid #8c97a4"></div>
<div class="a" style="left:818px;top:632px;width:1px;height:8px;background:#6c7784"></div>
<div class="a" style="left:823px;top:627px;width:16px;height:16px;background:#e3e7ec"></div>
<!-- status bar -->
<div class="a" style="left:40px;top:643px;width:799px;height:23px;background:linear-gradient(#eef1f5,#e2e6eb 50%,#d3d9e1);border-top:1px solid #b6bec9;border-bottom:1px solid #9ea8b4"></div>
<div class="t" style="left:48px;top:648px;font-size:11.7px;color:#2a2a2a">Готово</div>
<div class="a" style="left:94px;top:645px;width:1px;height:19px;background:#aab3be;box-shadow:1px 0 0 #fafbfc"></div>
<svg style="left:104px;top:647px" width="16" height="14" viewBox="0 0 16 14">
 <rect x="0.5" y="2.5" width="15" height="11" fill="#fff" stroke="#3a64a8"/>
 <rect x="1" y="3" width="14" height="2.5" fill="#4a7cc8"/>
 <path d="M3 7.5 H14 M3 9.5 H14 M3 11.5 H14 M6 6 V13 M10 6 V13" stroke="#7ea4d8" stroke-width=".8"/>
 <circle cx="3.5" cy="3" r="2.6" fill="#e0502a"/>
</svg>
<div class="a" style="left:129px;top:645px;width:1px;height:19px;background:#aab3be;box-shadow:1px 0 0 #fafbfc"></div>
<div class="a" style="left:583px;top:645px;width:1px;height:19px;background:#aab3be;box-shadow:1px 0 0 #fafbfc"></div>
<div class="a" style="left:587px;top:645px;width:19px;height:19px;border:1px solid #e5a250;border-radius:2px;background:linear-gradient(#fde7a6,#fcd97a 50%,#fbcf5e)"></div>
<svg style="left:590px;top:649px" width="13" height="11" viewBox="0 0 13 11"><rect x="0.5" y="0.5" width="12" height="10" fill="#fff" stroke="#555"/><path d="M0.5 3.5 H12.5 M0.5 6.5 H12.5 M4.5 0.5 V10.5 M8.5 0.5 V10.5" stroke="#555"/></svg>
<svg style="left:608px;top:648px" width="14" height="13" viewBox="0 0 14 13"><rect x="0.5" y="0.5" width="13" height="12" fill="#c8cdd4" stroke="#666"/><rect x="3.5" y="2.5" width="7" height="8" fill="#fff" stroke="#666"/><path d="M5 5 H9 M5 7 H9" stroke="#999"/></svg>
<svg style="left:627px;top:648px" width="14" height="13" viewBox="0 0 14 13"><rect x="0.5" y="0.5" width="13" height="12" fill="#c8cdd4" stroke="#666"/><rect x="2.5" y="1.5" width="4" height="7" fill="#fff" stroke="#666"/><rect x="7.5" y="1.5" width="3" height="5" fill="#fff" stroke="#666"/></svg>
<div class="t" style="left:652px;top:648px;font-size:12px;color:#2a2a2a">100%</div>
<div class="a" style="left:704px;top:653px;width:101px;height:1px;background:#8e959e;box-shadow:0 1px 0 #fafbfc"></div>
<svg style="left:687px;top:645px" width="18" height="18" viewBox="0 0 18 18"><circle cx="9" cy="9" r="8" fill="url(#zg)" stroke="#6c737c"/><path d="M5 9 H13" stroke="#333" stroke-width="2"/>
 <defs><linearGradient id="zg" x1="0" y1="0" x2="0" y2="1"><stop offset="0" stop-color="#fdfdfd"/><stop offset="1" stop-color="#d9dde2"/></linearGradient></defs></svg>
<svg style="left:803px;top:645px" width="18" height="18" viewBox="0 0 18 18"><circle cx="9" cy="9" r="8" fill="url(#zg)" stroke="#6c737c"/><path d="M5 9 H13 M9 5 V13" stroke="#333" stroke-width="2"/></svg>
<svg style="left:749px;top:646px" width="11" height="14" viewBox="0 0 11 14"><path d="M0.5 0.5 H10.5 V9 L5.5 13.5 L0.5 9 Z" fill="#f7f8fa" stroke="#6c737c"/></svg>
<svg style="left:828px;top:654px" width="10" height="10" viewBox="0 0 10 10"><g fill="#a9b1bb"><rect x="7" y="1" width="2" height="2"/><rect x="4" y="4" width="2" height="2"/><rect x="7" y="4" width="2" height="2"/><rect x="1" y="7" width="2" height="2"/><rect x="4" y="7" width="2" height="2"/><rect x="7" y="7" width="2" height="2"/></g></svg>
<!-- selection border C255 -->
<div class="a" style="left:387px;top:537px;width:163px;height:23px;border:2px solid #000"></div>
<!-- red rect 1 -->
<div class="a" style="left:383px;top:532px;width:172px;height:34px;border:5.5px solid #fe0000;border-radius:12px;box-shadow:0 4px 5px rgba(40,50,60,.4),inset 2px 4px 5px rgba(40,50,60,.45)"></div>
<!-- red rect 2 -->
<div class="a" style="left:254px;top:165px;width:37px;height:38px;border:5.5px solid #fe0000;border-radius:12px;box-shadow:0 5px 6px rgba(40,50,60,.45),inset 2px 3px 5px rgba(40,50,60,.35)"></div>
<svg style="left:0;top:0" width="879" height="705" viewBox="0 0 879 705">
 <defs>
  <linearGradient id="og" x1="0.15" y1="0.1" x2="0.85" y2="0.9">
   <stop offset="0" stop-color="#f2ad72"/>
   <stop offset="0.42" stop-color="#f1a264"/>
   <stop offset="0.58" stop-color="#f46a38"/>
   <stop offset="1" stop-color="#f5501f"/>
  </linearGradient>
 </defs>
 <circle cx="556.7" cy="564.5" r="21.6" fill="url(#og)" stroke="#b0501a" stroke-width="1"/>
 <circle cx="301.2" cy="188.8" r="20.2" fill="url(#og)" stroke="#b0501a" stroke-width="1"/>
 <text x="557" y="572.5" text-anchor="middle" font-family="Liberation Serif" font-weight="bold" font-size="24" fill="#fff" stroke="#3a2218" stroke-width="2.4" paint-order="stroke" style="letter-spacing:0">1</text>
 <text x="302" y="195.6" text-anchor="middle" font-family="Liberation Sans" font-weight="bold" font-size="21" fill="#fff" stroke="#3a2218" stroke-width="1.8" paint-order="stroke">2</text>
</svg>

</body></html>
